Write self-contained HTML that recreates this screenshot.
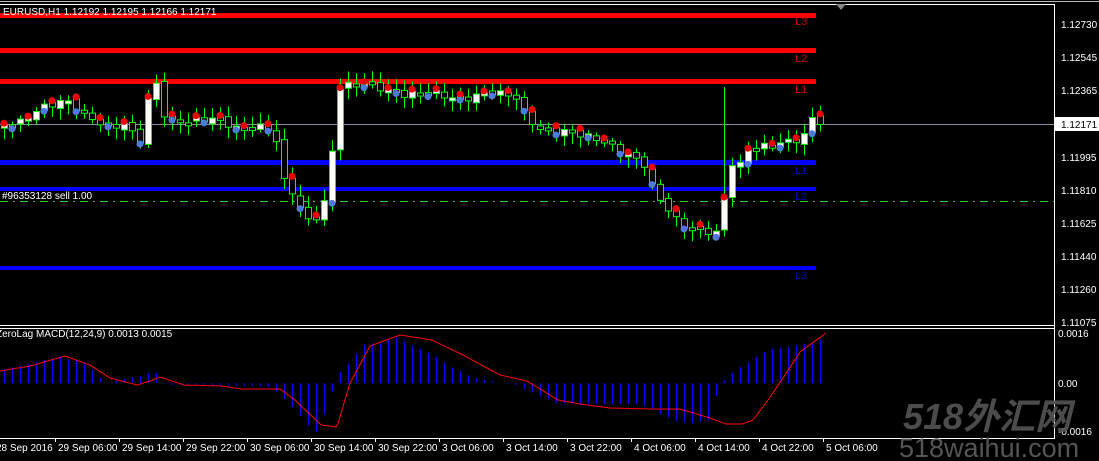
<!DOCTYPE html>
<html><head><meta charset="utf-8"><style>
html,body{margin:0;padding:0;background:#000;width:1099px;height:461px;overflow:hidden}
svg{display:block}
text{font-family:"Liberation Sans","Noto Sans CJK SC",sans-serif}
</style></head><body>
<svg id="s" width="1099" height="461" xmlns="http://www.w3.org/2000/svg">
<rect width="1099" height="461" fill="#000"/>
<line x1="0" y1="1.5" x2="1099" y2="1.5" stroke="#bbb"/>
<line x1="0" y1="4.5" x2="1055" y2="4.5" stroke="#fff"/>
<polygon points="836,4 846,4 841,10" fill="#888"/>
<g id="lv">
<rect x="0" y="13" width="816" height="5" fill="#f00"/>
<rect x="0" y="48" width="816" height="5" fill="#f00"/>
<rect x="0" y="79" width="816" height="5" fill="#f00"/>
<rect x="0" y="160" width="816" height="5" fill="#00f"/>
<rect x="0" y="187" width="816" height="4" fill="#00f"/>
<rect x="0" y="266" width="816" height="4" fill="#00f"/>
</g>
<line x1="0" y1="124.5" x2="1054" y2="124.5" stroke="#8a9099"/>
<line x1="0" y1="201.5" x2="1054" y2="201.5" stroke="#3c3" stroke-dasharray="8,5,2,5"/>
<text x="2" y="199" font-size="10" fill="#fff">#96353128 sell 1.00</text>
<g font-size="11">
<text x="795" y="25" fill="#c00">L3</text>
<text x="795" y="62" fill="#c00">L2</text>
<text x="795" y="93" fill="#c00">L1</text>
<text x="795" y="174" fill="#00b">L1</text>
<text x="795" y="200" fill="#00b">L2</text>
<text x="795" y="279" fill="#00b">L3</text>
</g>
<g id="c"></g>
<text x="3" y="15" font-size="10" fill="#fff">EURUSD,H1  1.12192 1.12195 1.12166 1.12171</text>
<line x1="1054.5" y1="4" x2="1054.5" y2="438" stroke="#fff"/>
<line x1="0" y1="325.5" x2="1055" y2="325.5" stroke="#fff"/>
<line x1="0" y1="328.5" x2="1055" y2="328.5" stroke="#fff"/>
<line x1="0" y1="438.5" x2="1055" y2="438.5" stroke="#fff"/>
<g font-size="10" fill="#fff">
<text x="1061" y="28">1.12730</text>
<text x="1061" y="61">1.12545</text>
<text x="1061" y="94">1.12365</text>
<rect x="1055" y="117" width="44" height="14" fill="#fff"/>
<text x="1061" y="128" fill="#000">1.12171</text>
<text x="1061" y="161">1.11995</text>
<text x="1061" y="194">1.11810</text>
<text x="1061" y="227">1.11625</text>
<text x="1061" y="260">1.11440</text>
<text x="1061" y="293">1.11260</text>
<text x="1061" y="326">1.11075</text>
<text x="1058" y="337">0.0016</text>
<text x="1058" y="387">0.00</text>
<text x="1058" y="435">-0.0016</text>
</g>
<g stroke="#fff" id="tk"></g>
<g id="m"></g>
<text x="-4" y="337" font-size="10" fill="#fff">ZeroLag MACD(12,24,9) 0.0013 0.0015</text>
<g font-size="10" fill="#fff" id="tl"></g>
<text x="903" y="429" font-size="36" font-style="italic" font-weight="bold" fill="#555" opacity="0.9">518外汇网</text>
<text x="899" y="457" font-size="27" fill="#555">518waihui.com</text>
</svg>
<script>
(function(){
var NS="http://www.w3.org/2000/svg";
function el(p,t,a){var e=document.createElementNS(NS,t);for(var k in a)e.setAttribute(k,a[k]);p.appendChild(e);return e;}
function interp(kp,x){for(var i=0;i<kp.length-1;i++){if(x<=kp[i+1][0]){var a=kp[i],b=kp[i+1];return a[1]+(b[1]-a[1])*(x-a[0])/(b[0]-a[0]);}}return kp[kp.length-1][1];}
var kp=[[0,126],[20,122],[40,108],[65,100],[90,118],[110,128],[128,122],[138,150],[148,100],[158,80],[165,120],[185,122],[215,118],[240,130],[265,126],[275,135],[283,180],[295,195],[305,222],[318,215],[328,195],[333,140],[338,88],[360,82],[380,88],[400,95],[430,92],[460,100],[490,92],[515,96],[525,115],[540,130],[570,132],[600,140],[625,153],[645,165],[655,195],[665,205],[680,225],[700,230],[715,233],[722,230],[728,140],[735,180],[745,150],[770,145],[795,140],[805,135],[812,118],[818,122]];
var g=document.getElementById('c');var prev=126;
for(var i=0;i<103;i++){var x=4+8*i;var c=interp(kp,x)+Math.sin(i*2.3)*3;var o=prev+Math.cos(i*1.7)*2;
 var bt=Math.min(o,c),bb=Math.max(o,c);if(bb-bt<3)bb=bt+3;
 var hi=bt-3-Math.abs(Math.sin(i*3.1))*8,lo=bb+3+Math.abs(Math.cos(i*2.7))*8;
 if(i==90)hi=87;
 el(g,'line',{x1:x+.5,y1:hi,x2:x+.5,y2:lo,stroke:'#0f0'});
 el(g,'rect',{x:x-2.5,y:bt,width:6,height:bb-bt,fill:(c<o?'#fff':'#000'),stroke:'#0f0','stroke-width':1});
 if(i%3==0)el(g,'circle',{cx:x,cy:bt-2,r:3.5,fill:'#e00'});
 if(i%4==1)el(g,'circle',{cx:x,cy:bb+1,r:3.5,fill:'#4d7bd6'});
 prev=c;}
var m=document.getElementById('m');
var hk=[[0,370],[58,357],[84,362],[95,373],[105,383],[140,376],[155,372],[165,385],[270,386],[280,395],[295,410],[315,434],[326,410],[337,375],[347,365],[363,345],[380,342],[395,337],[410,345],[432,355],[453,368],[474,378],[495,382],[516,385],[537,395],[558,403],[600,404],[640,404],[662,415],[678,422],[694,423],[710,420],[718,388],[726,378],[741,366],[752,360],[768,350],[784,347],[800,345],[816,340],[826,338]];
for(var i=0;i<103;i++){var x=4+8*i;var h=interp(hk,x);el(m,'line',{x1:x+.5,y1:383,x2:x+.5,y2:h,stroke:'#00f','stroke-width':1.3});}
var sk=[[0,371],[30,366],[65,356],[90,365],[110,378],[137,385],[150,381],[160,377],[184,385],[221,386],[242,389],[280,389],[295,400],[321,425],[337,427],[350,383],[370,346],[400,335],[432,340],[463,355],[500,375],[527,381],[558,400],[580,404],[610,408],[650,409],[680,409],[710,418],[726,424],[742,424],[753,420],[768,400],[783,378],[800,352],[815,341],[826,333]];
var d='';for(var x=0;x<=826;x+=2){d+=(x?'L':'M')+x+','+interp(sk,x).toFixed(1);}
el(m,'path',{d:d,fill:'none',stroke:'#f00','stroke-width':1});
var labs=["28 Sep 2016","29 Sep 06:00","29 Sep 14:00","29 Sep 22:00","30 Sep 06:00","30 Sep 14:00","30 Sep 22:00","3 Oct 06:00","3 Oct 14:00","3 Oct 22:00","4 Oct 06:00","4 Oct 14:00","4 Oct 22:00","5 Oct 06:00"];
var tl=document.getElementById('tl'),tk=document.getElementById('tk');
for(var j=0;j<labs.length;j++){var tx=(j==0)?-7:55+64*(j-1);var t=el(tl,'text',{x:tx+3,y:451});t.textContent=labs[j];if(j)el(tk,'line',{x1:tx+.5,y1:438,x2:tx+.5,y2:442});}
})();
</script>
</body></html>
